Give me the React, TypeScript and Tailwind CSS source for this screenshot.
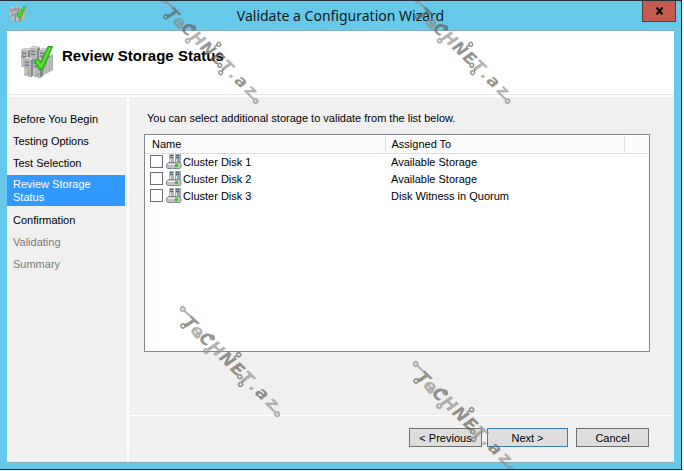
const steps = [
  { label: 'Before You Begin', state: 'done' },
  { label: 'Testing Options', state: 'done' },
  { label: 'Test Selection', state: 'done' },
  { label: 'Review Storage Status', state: 'current' },
  { label: 'Confirmation', state: 'done' },
  { label: 'Validating', state: 'pending' },
  { label: 'Summary', state: 'pending' },
];

const disks = [
  { id: 'disk-1', name: 'Cluster Disk 1', assigned: 'Available Storage' },
  { id: 'disk-2', name: 'Cluster Disk 2', assigned: 'Available Storage' },
  { id: 'disk-3', name: 'Cluster Disk 3', assigned: 'Disk Witness in Quorum' },
];

const stepStyles: Record<string, string> = {
  done: 'py-1 text-black',
  current: 'mr-[2px] mb-1 bg-[#3399ff] pt-[3px] pb-[2px] pr-6 text-white',
  pending: 'py-1 text-[#7a7a7a]',
};

// One tower of the server cluster
function Tower({ x, y }: { x: number; y: number }) {
  return (
    <g transform={`translate(${x} ${y})`}>
      <path d="M0 2 L3 0 L10 1 V18 L7 20 L0 18 Z" fill="#85888b" />
      <path d="M0 2 L7 3 V20 L0 18 Z" fill="#b4b6b8" />
      <path d="M0 2 L3 0 L10 1 L7 3 Z" fill="#d2d3d4" />
      <path d="M1 5 L5 5.5 M1 8 L5 8.5" stroke="#63676b" strokeWidth="1" />
      <path d="M1 11 V17" stroke="#dfe0e1" strokeWidth="1" />
      <circle cx="4.5" cy="16.5" r="1" fill="#5cc42e" />
    </g>
  );
}

function ClusterIcon({ className }: { className?: string }) {
  return (
    <svg viewBox="0 0 32 32" className={className} aria-hidden="true">
      <Tower x={0} y={2} />
      <Tower x={9} y={0} />
      <Tower x={18} y={2} />
      <path d="M21 14 L32 8 V24 L21 30 Z" fill="#a9abad" />
      <path d="M24 14 V28 M27 12 V26 M30 11 V24" stroke="#d0d1d2" strokeWidth="1" />
      <Tower x={3} y={11} />
      <Tower x={12} y={12} />
      <path
        d="M13 14.5 L17 12.5 L20 16 L27 0.5 L31.5 0.5 L22 23.5 L18 23.5 Z"
        fill="#3fd022"
        stroke="#279a1a"
        strokeWidth="1"
      />
      <path d="M15.5 14.5 L20 20.5 L29 2" fill="none" stroke="#7bea58" strokeWidth="1" />
    </svg>
  );
}

function DiskIcon() {
  return (
    <svg viewBox="0 0 16 16" className="h-4 w-4 shrink-0" aria-hidden="true">
      <path d="M3 1 L4 0 H8 V10 H3 Z" fill="#a9b4bc" />
      <path d="M9 0 H15 V10 H9 Z" fill="#9aa6af" />
      <path d="M4 1.5 H7 M4 3.5 H7 M10 1.5 H13 M10 3.5 H13" stroke="#4c6472" strokeWidth="1" />
      <path d="M4.5 5 V10 M10.5 5 V10" stroke="#e4e9ed" strokeWidth="1" />
      <path d="M2.5 8.5 H13.5 L15 10.5 V13 L14 14.5 H1.5 L0.5 13 V10.5 Z" fill="#bfc3c5" stroke="#85898c" strokeWidth="1" />
      <path d="M2 10.5 H13" stroke="#eceeef" strokeWidth="1" />
      <rect x="9" y="10" width="3" height="3" fill="#2fc51c" />
    </svg>
  );
}

// Diagonal circuit-style brand mark
function Watermark({ className }: { className: string }) {
  return (
    <svg
      viewBox="0 0 112 124"
      className={`pointer-events-none absolute overflow-visible ${className}`}
      aria-hidden="true"
    >
      <g transform="translate(8 25) rotate(44)" opacity="0.65">
        <g
          fontFamily='"DejaVu Sans", sans-serif'
          fontWeight="700"
          fontStyle="italic"
          fontSize="17"
          textAnchor="middle"
        >
          <text y="-1" fill="#605b55">
            <tspan x="3">T</tspan>
            <tspan x="26">C</tspan>
            <tspan x="55">N</tspan>
            <tspan x="69">E</tspan>
            <tspan x="104">a</tspan>
          </text>
          <text y="-1" fill="#8f8b87">
            <tspan x="14">e</tspan>
            <tspan x="40">H</tspan>
            <tspan x="82">T</tspan>
            <tspan x="93">.</tspan>
            <tspan x="118">z</tspan>
          </text>
        </g>
        <g fill="none" stroke="#605b55" strokeWidth="1.5">
          <path d="M1 -4 L0 -2 M58 -13 L60 -17 M70 -3 L74 -3 M82 -3 V0" />
          <circle cx="0" cy="0" r="2" />
          <circle cx="29" cy="-12" r="2" />
          <circle cx="60" cy="-18" r="2" />
          <circle cx="76" cy="-3" r="2" />
          <circle cx="82" cy="2" r="2" />
        </g>
        <g fill="none" stroke="#8f8b87" strokeWidth="2">
          <path d="M-10 -12 H-2 M35 -2 V0 M120 -2 H127" />
          <circle cx="-12" cy="-12" r="2" />
          <circle cx="17" cy="-3" r="2" />
          <circle cx="34" cy="2" r="2" />
          <circle cx="129" cy="-2" r="2" />
        </g>
      </g>
    </svg>
  );
}

export default function App() {
  return (
    <div className="flex min-h-screen flex-col bg-[#f4f4f6] pr-[2px] pb-px font-['Liberation_Sans',Arial,sans-serif] text-[11px] leading-[14px] text-black">
      <div className="relative flex flex-1 flex-col overflow-hidden border-t border-r border-b border-[#25313a] bg-[#66c9e9] pr-[7px] pb-[6px] pl-[7px]">
        <header className="flex h-[29px] items-start">
          <ClusterIcon className="mt-[5px] ml-[3px] h-4 w-4" />
          <h1 className="flex-1 pl-[13px] text-center font-['Noto_Sans',sans-serif] text-[14px] leading-[29px] text-[#10181c]">
            Validate a Configuration Wizard
          </h1>
          <button
            type="button"
            aria-label="Close"
            className="-mr-[2px] flex h-[21px] w-[34px] items-center justify-center border border-t-0 border-[#5d3a3c] bg-[#c45a50]"
          >
            <svg viewBox="0 0 9 8" className="h-2 w-[9px]" aria-hidden="true">
              <path d="M1.5 0.5 L7.5 7.5 M7.5 0.5 L1.5 7.5" stroke="#000" strokeWidth="2" />
            </svg>
          </button>
        </header>

        <main className="flex flex-1 flex-col border-t border-b border-[#7fa9bb] bg-[#f0f0f0]">
          <div className="flex h-[66px] items-start border-b-2 border-white bg-white">
            <div className="flex h-16 flex-1 items-start border-b border-[#e6e6e6] pl-[14px]">
              <ClusterIcon className="mt-[15px] h-8 w-8" />
              <h2 className="mt-4 ml-[9px] text-[15px] leading-[18px] font-bold">Review Storage Status</h2>
            </div>
          </div>

          <div className="flex flex-1">
            <nav aria-label="Wizard steps" className="w-[122px] shrink-0 border-r-2 border-white pt-3">
              <ol>
                {steps.map((step) => (
                  <li
                    key={step.label}
                    aria-current={step.state === 'current' ? 'step' : undefined}
                    className={`pl-[6px] leading-[13px] ${stepStyles[step.state]}`}
                  >
                    <span className="block min-h-[14px]">{step.label}</span>
                  </li>
                ))}
              </ol>
            </nav>

            <form className="flex min-w-0 flex-1 flex-col" onSubmit={(e) => e.preventDefault()}>
              <div className="flex flex-1 flex-col pt-[14px] pr-6 pb-[63px] pl-[15px]">
                <p className="mb-[9px] pl-[3px]">
                  You can select additional storage to validate from the list below.
                </p>
                <div className="flex-1 border border-[#828790] bg-white p-px">
                  <table className="w-full table-fixed border-collapse text-left">
                    <thead>
                      <tr className="h-[17px] border-b border-[#dedfe1] bg-[#fcfcfc]">
                        <th className="w-[239px] border-r border-[#dedfe1] p-0 pl-[6px] font-normal">Name</th>
                        <th className="w-[239px] border-r border-[#dedfe1] p-0 pl-[6px] font-normal">Assigned To</th>
                        <td className="p-0" />
                      </tr>
                    </thead>
                    <tbody>
                      {disks.map((disk) => (
                        <tr key={disk.id} className="h-[17px]">
                          <td className="p-0 pl-1">
                            <div className="flex items-center">
                              <input
                                id={disk.id}
                                type="checkbox"
                                className="mr-[3px] h-[13px] w-[13px] shrink-0 appearance-none border border-[#6d6d6d] bg-white checked:bg-[#3399ff]"
                              />
                              <label htmlFor={disk.id} className="flex items-center gap-px">
                                <DiskIcon />
                                {disk.name}
                              </label>
                            </div>
                          </td>
                          <td className="p-0 pl-[6px]">{disk.assigned}</td>
                          <td className="p-0" />
                        </tr>
                      ))}
                    </tbody>
                  </table>
                </div>
              </div>

              <footer className="flex h-[47px] items-start justify-end border-t border-white pt-3 pr-[25px]">
                <button type="button" className="h-[19px] w-[73px] border border-[#707070] bg-[#dddddd]">
                  &lt; Previous
                </button>
                <button type="submit" className="mr-2 ml-[5px] h-[19px] w-[81px] border border-[#3c7fb1] bg-[#dddddd]">
                  Next &gt;
                </button>
                <button type="button" className="h-[19px] w-[73px] border border-[#707070] bg-[#dddddd]">
                  Cancel
                </button>
              </footer>
            </form>
          </div>
        </main>

        <Watermark className="-top-2 left-[158px] w-[107px]" />
        <Watermark className="-top-2 left-[410px] w-[107px]" />
        <Watermark className="top-[300px] left-[175px] w-28" />
        <Watermark className="top-[355px] left-[408px] w-28" />
      </div>
    </div>
  );
}
